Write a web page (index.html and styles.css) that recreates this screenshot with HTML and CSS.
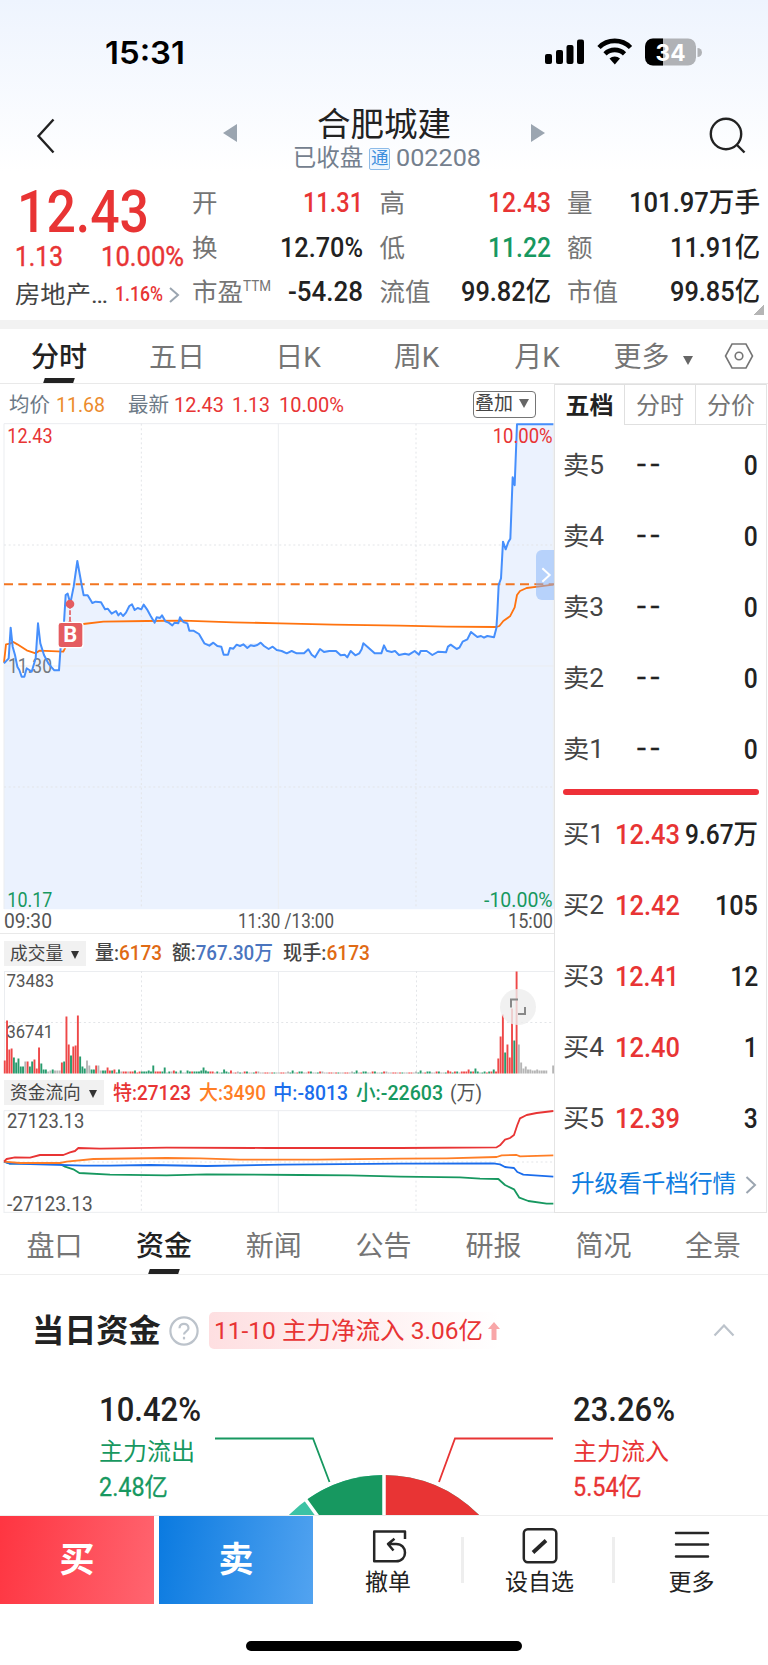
FILE: index.html
```html
<!DOCTYPE html>
<html lang="zh-CN">
<head>
<meta charset="utf-8">
<title>合肥城建 002208</title>
<link rel="stylesheet" href="styles.css">
</head>
<body>
<div class="screen">
  <div class="top">
    <div class="status">
      <span class="clock fit" data-w="80">15:31</span>
      <svg class="status-icons" viewBox="0 0 160 30" width="160" height="30">
        <rect x="0" y="16" width="7" height="10" rx="2"/><rect x="11" y="12" width="7" height="14" rx="2"/><rect x="21.500" y="7" width="7" height="19" rx="2"/><rect x="32" y="1.500" width="7" height="24.500" rx="2"/>
        <g fill="none" stroke="#000" stroke-width="4.600"><path d="M54 9.500a22 22 0 0 1 31.500 0"/><path d="M60 15.800a14 14 0 0 1 19.500 0"/></g>
        <path d="M64.500 20.500a8 8 0 0 1 10.500 0l-5.200 6z"/>
        <rect x="100" y="0.500" width="51" height="27" rx="8" fill="#b0b2b6"/><path d="M108 .5h10v27h-10a8 8 0 0 1-8-8v-11a8 8 0 0 1 8-8z"/>
        <path d="M152.500 10a4.500 4.500 0 0 1 0 9z" fill="#b0b2b6"/>
        <text x="110.500" y="22.500" textLength="30" lengthAdjust="spacingAndGlyphs" class="batt">34</text>
      </svg>
    </div>
    <div class="nav">
      <svg class="back" width="20" height="36" viewBox="0 0 20 36"><path d="M17.500 1.500L2.500 18l15 16.500"/></svg>
      <svg class="prev" width="14" height="18" viewBox="0 0 14 18"><path d="M14 0v18L0 9z"/></svg>
      <div class="title">
        <div class="name">合肥城建</div>
        <div class="sub"><span>已收盘</span><span class="tag">通</span><span class="fit" data-w="85">002208</span></div>
      </div>
      <svg class="next" width="14" height="18" viewBox="0 0 14 18"><path d="M0 0v18l14-9z"/></svg>
      <svg class="search" width="38" height="38" viewBox="0 0 38 38"><circle cx="17" cy="17" r="15.200"/><path d="M27.500 27.500l8 8"/></svg>
    </div>
    <div class="quote">
      <div class="price">
        <div class="last"><span class="fit" data-w="132">12.43</span></div>
        <div class="chg"><span class="fit" data-w="48">1.13</span><span class="fit" data-w="83">10.00%</span></div>
        <div class="sector"><span class="fit" data-w="93">房地产…</span><span class="pct fit" data-w="48">1.16%</span><svg width="12" height="18" viewBox="0 0 12 18"><path d="M2 2l8 7-8 7"/></svg></div>
      </div>
      <div class="stats">
        <div class="st"><label>开</label><b class="red fit" data-w="60">11.31</b></div>
        <div class="st"><label>高</label><b class="red fit" data-w="63">12.43</b></div>
        <div class="st"><label>量</label><b class="fit" data-w="131">101.97万手</b></div>
        <div class="st"><label>换</label><b class="fit" data-w="83">12.70%</b></div>
        <div class="st"><label>低</label><b class="green fit" data-w="63">11.22</b></div>
        <div class="st"><label>额</label><b class="fit" data-w="90">11.91亿</b></div>
        <div class="st"><label>市盈<sup class="fit" data-w="28">TTM</sup></label><b class="fit" data-w="75">-54.28</b></div>
        <div class="st"><label>流值</label><b class="fit" data-w="90">99.82亿</b></div>
        <div class="st"><label>市值</label><b class="fit" data-w="90">99.85亿</b></div>
      </div>
      <i class="corner"></i>
    </div>
  </div>
  <div class="band"></div>

  <div class="periods">
    <span class="on">分时</span><span>五日</span><span>日K</span><span>周K</span><span>月K</span><span class="more">更多<i class="tri"></i></span>
    <svg width="30" height="28" viewBox="0 0 30 28"><path d="M8 2h14l6.500 12L22 26H8L1.500 14z"/><circle cx="15" cy="14" r="3.800"/></svg>
  </div>

  <div class="market">
    <div class="charts">
      <div class="info">
        <span class="lab">均价</span><span class="avg fit" data-w="49">11.68</span>
        <span class="lab l2">最新</span><span class="red fit" data-w="50">12.43</span><span class="red v2 fit" data-w="38">1.13</span><span class="red v3 fit" data-w="65">10.00%</span>
        <span class="overlay">叠加<i class="tri"></i></span>
      </div>
      <svg class="main" width="554" height="487" viewBox="0 279 1662 1461">
        <path class="area" d="M12 1738V1000L26 985 32 893 38 950 45 975 52 1010 58 1020 65 1040 73 1040 80 1015 88 1020 95 1025 107 985 114 880 121 940 132 975 145 1000 155 1012 163 1021 177 1021 182 950 190 910 197 795 203 791 211 820 221 770 232 693 245 765 251 796 263 796 277 819 303 817 315 838 335 851 348 843 355 856 369 858 388 828 396 823 404 840 424 838 431 824 452 858 464 878 470 862 486 856 517 886 535 880 540 862 562 880 568 902 597 912 613 940 640 938 664 950 671 974 684 974 690 954 730 943 782 938 806 957 860 970 912 970 925 958 945 982 960 957 1008 963 1042 982 1052 963 1066 976 1085 958 1090 940 1124 970 1144 970 1152 946 1160 964 1197 975 1244 963 1297 975 1338 967 1352 944 1378 953 1402 928 1413 906 1432 921 1482 922 1489 895 1492 850 1496 765 1503 745 1509 635 1517 658 1531 626 1538 442 1544 466 1551 282H1660V1738z"/>
        <g class="grid"><path d="M12 281H1662M12 1008H1662M12 281V1737M835 281V1737M1660 281V1737"/><path class="dot" d="M12 645H1662M12 1371H1662M424 281V1737M1248 281V1737"/></g>
        <path class="dash" d="M12 763H1662"/>
        <path class="mean" d="M12 998L18 943 30 941 40 936 52 943 80 961 107 970 118 962 190 965 200 945 225 900 250 882 310 875 440 873 550 872 700 877 840 880 1000 884 1200 887 1340 890 1490 891 1498 888 1510 873 1530 859 1544 832 1551 795 1560 783 1580 774 1620 769 1660 764"/>
        <text x="24" y="1030" class="gray" textLength="132" lengthAdjust="spacingAndGlyphs">11.30</text>
        <path class="line" d="M12 1000L26 985 32 893 38 950 45 975 52 1010 58 1020 65 1040 73 1040 80 1015 88 1020 95 1025 107 985 114 880 121 940 132 975 145 1000 155 1012 163 1021 177 1021 182 950 190 910 197 795 203 791 211 820 221 770 232 693 245 765 251 796 263 796 277 819 287 815 303 817 315 838 323 836 335 851 348 843 355 856 362 849 369 858 378 848 388 828 396 823 404 840 413 834 424 838 431 824 441 838 452 858 464 878 470 862 480 864 486 856 496 874 506 878 517 886 524 878 535 880 540 862 550 876 562 880 568 902 580 902 597 912 613 940 628 947 640 938 652 948 664 950 671 974 684 974 690 954 700 956 710 944 720 948 730 943 742 954 752 946 762 948 772 945 782 938 792 948 806 957 818 950 830 960 845 963 860 970 875 963 890 970 912 970 925 958 935 974 945 982 960 957 972 966 988 963 1008 963 1022 976 1034 974 1042 982 1052 963 1066 976 1078 970 1085 958 1090 940 1102 950 1124 970 1144 970 1152 946 1160 962 1175 966 1185 963 1197 975 1215 971 1227 974 1244 963 1257 974 1262 963 1280 963 1297 975 1315 965 1338 967 1344 950 1352 944 1370 957 1378 953 1388 935 1402 928 1413 906 1432 921 1443 918 1452 923 1462 918 1482 922 1489 895 1492 850 1496 765 1503 745 1509 635 1517 658 1525 636 1531 626 1538 442 1544 466 1551 283H1660"/>
        <g class="mark"><path d="M210 822V880" class="stem"/><circle cx="210" cy="822" r="13"/><path d="M200 880l10-9 10 9z"/><rect x="174" y="877" width="75" height="76" rx="9"/><text x="190" y="935" textLength="42" lengthAdjust="spacingAndGlyphs">B</text></g>
        <g class="handle"><path d="M1662 660h-36a18 18 0 0 0-18 18v114a18 18 0 0 0 18 18h36z"/><path class="arr" d="M1627 715l22 20-22 20"/></g>
        <text x="22" y="339" class="r" textLength="136" lengthAdjust="spacingAndGlyphs">12.43</text>
        <text x="1478" y="339" class="r" textLength="180" lengthAdjust="spacingAndGlyphs">10.00%</text>
        <text x="22" y="1730" class="g" textLength="135" lengthAdjust="spacingAndGlyphs">10.17</text>
        <text x="1452" y="1730" class="g" textLength="206" lengthAdjust="spacingAndGlyphs">-10.00%</text>
      </svg>
      <div class="times"><span class="fit" data-w="48">09:30</span><span class="fit" data-w="96">11:30 /13:00</span><span class="fit" data-w="45">15:00</span></div>
      <div class="legend vol">
        <span class="pick">成交量<i class="tri"></i></span>
        <span class="fit" data-w="67">量:<em class="o">6173</em></span><span class="fit" data-w="101">额:<em class="b">767.30万</em></span><span class="fit" data-w="87">现手:<em class="o">6173</em></span>
      </div>
      <svg class="volume" width="554" height="103" viewBox="0 0 554 103">
        <g class="grid thin"><path d="M4 .5H554M4.500 0V102M278.500 0V102"/><path class="dot" d="M4 51.500H554M141.500 0V102M416.500 0V102"/></g>
        <g id="bars"></g>
        <text x="6.500" y="15.800" textLength="47.500" lengthAdjust="spacingAndGlyphs">73483</text>
        <text x="6.500" y="66.800" textLength="46.500" lengthAdjust="spacingAndGlyphs">36741</text>
        <circle cx="518" cy="36" r="18" class="knob"/><path class="expand" d="M511 36.500v-8h7M525 36v7h-7"/>
      </svg>
      <div class="legend flow">
        <span class="pick">资金流向<i class="tri"></i></span>
        <span class="red fit" data-w="78">特:27123</span><span class="o2 fit" data-w="67">大:3490</span><span class="bl fit" data-w="75">中:-8013</span><span class="green fit" data-w="87">小:-22603</span><span class="unit fit" data-w="32">(万)</span>
      </div>
      <svg class="flows" width="554" height="103" viewBox="0 690 1662 309">
        <g class="grid"><path d="M12 692H1662M12 692V999M835 692V999M12 997H1662"/><path class="dot" d="M12 846H1662M424 692V999M1248 692V999"/></g>
        <path stroke="#179860" d="M12 845L30 851 100 849 180 852 195 860 220 868 238 879 330 884 500 886 620 883 900 885 1050 886 1200 890 1380 892 1440 896 1495 897 1515 915 1542 928 1558 953 1585 963 1640 971 1660 971"/>
        <path stroke="#1b6dec" d="M12 845L30 851 90 852 250 857 330 857 450 855 620 858 850 854 1200 851 1480 850 1500 853 1515 861 1542 864 1552 876 1570 884 1660 890"/>
        <path stroke="#ff7e26" d="M12 845L60 849 180 849 200 845 280 837 500 834 600 835 720 839 950 839 1200 836 1340 835 1490 831 1505 826 1550 825 1560 829 1660 826"/>
        <path stroke="#e83434" d="M12 845L20 837 45 832 90 833 120 825 190 825 210 817 225 813 235 804 300 806 500 803 800 804 1200 804 1490 802 1500 796 1515 779 1530 774 1542 765 1552 735 1560 715 1580 705 1610 699 1660 693"/>
        <text x="21" y="744" textLength="232" lengthAdjust="spacingAndGlyphs">27123.13</text>
        <text x="21" y="992" textLength="257" lengthAdjust="spacingAndGlyphs">-27123.13</text>
      </svg>
    </div>

    <div class="book">
      <div class="btabs"><span class="on">五档</span><span>分时</span><span>分价</span></div>
      <div class="row"><span class="k fit" data-w="41">卖5</span><span class="dd fit" data-w="27">--</span><span class="q fit" data-w="14">0</span></div>
      <div class="row"><span class="k fit" data-w="41">卖4</span><span class="dd fit" data-w="27">--</span><span class="q fit" data-w="14">0</span></div>
      <div class="row"><span class="k fit" data-w="41">卖3</span><span class="dd fit" data-w="27">--</span><span class="q fit" data-w="14">0</span></div>
      <div class="row"><span class="k fit" data-w="41">卖2</span><span class="dd fit" data-w="27">--</span><span class="q fit" data-w="14">0</span></div>
      <div class="row"><span class="k fit" data-w="41">卖1</span><span class="dd fit" data-w="27">--</span><span class="q fit" data-w="14">0</span></div>
      <div class="split"></div>
      <div class="row"><span class="k fit" data-w="41">买1</span><span class="p fit" data-w="65">12.43</span><span class="q fit" data-w="73">9.67万</span></div>
      <div class="row"><span class="k fit" data-w="41">买2</span><span class="p fit" data-w="65">12.42</span><span class="q fit" data-w="43">105</span></div>
      <div class="row"><span class="k fit" data-w="41">买3</span><span class="p fit" data-w="64">12.41</span><span class="q fit" data-w="28">12</span></div>
      <div class="row"><span class="k fit" data-w="41">买4</span><span class="p fit" data-w="65">12.40</span><span class="q fit" data-w="14">1</span></div>
      <div class="row"><span class="k fit" data-w="41">买5</span><span class="p fit" data-w="65">12.39</span><span class="q fit" data-w="14">3</span></div>
      <div class="upgrade"><span>升级看千档行情</span><svg width="12" height="20" viewBox="0 0 12 20"><path d="M1.500 2l8.500 8-8.500 8"/></svg></div>
    </div>
  </div>

  <div class="sections"><span>盘口</span><span class="on">资金</span><span>新闻</span><span>公告</span><span>研报</span><span>简况</span><span>全景</span></div>

  <div class="fund-head">
    <h2>当日资金</h2>
    <svg width="30" height="30" viewBox="0 0 30 30"><circle cx="15" cy="15" r="13.600"/><path d="M10.500 12.300c0-6 9-6 9 0 0 3.200-4.500 3-4.500 6.200"/><path d="M15 20.800v2.600"/></svg>
    <span class="badge"><span class="fit" data-w="269">11-10 主力净流入 3.06亿</span><svg width="12" height="18" viewBox="0 0 12 18"><path d="M6 0l6 7H8.500v11h-5V7H0z"/></svg></span>
    <svg class="up" width="22" height="13" viewBox="0 0 22 13"><path d="M1.500 11.500L11 1.500l9.500 10"/></svg>
  </div>

  <div class="fund-body">
    <div class="part green"><b class="fit" data-w="102">10.42%</b><span>主力流出</span><em class="fit" data-w="69">2.48亿</em></div>
    <svg class="pie" width="338" height="103" viewBox="0 0 338 103">
      <path class="ln" stroke="#179860" d="M0 26.500h98L114.500 70"/>
      <path class="ln" stroke="#e83434" d="M338 26.500h-98L224 70"/>
      <circle cx="169" cy="196" r="133" fill="#3cc2a4"/>
      <path d="M169 196L91.200 88.100A133 133 0 0 1 169 63z" fill="#179860"/>
      <path d="M169 196V63A133 133 0 0 1 302 196z" fill="#e83434"/>
      <path d="M169 196V60M169 196L89.500 86" stroke="#fff" stroke-width="3.500"/>
    </svg>
    <div class="part red"><b class="fit" data-w="102">23.26%</b><span>主力流入</span><em class="fit" data-w="69">5.54亿</em></div>
  </div>

  <div class="bar">
    <div class="buy">买</div><div class="sell">卖</div>
    <div class="act"><svg width="36" height="36" viewBox="0 0 36 36"><path d="M33 11V3.500H2.200v29.800H24c12 0 12-17.300 0-17.300h-8M22.500 10.800L16 16l5.500 6.500"/></svg><span>撤单</span></div>
    <i></i>
    <div class="act"><svg width="36" height="36" viewBox="0 0 36 36"><rect x="1.800" y="1.300" width="32.500" height="33" rx="4"/><path stroke-width="3.800" d="M11 24.500L24 12.500"/></svg><span>设自选</span></div>
    <i></i>
    <div class="act last-act"><svg width="36" height="36" viewBox="0 0 36 36"><path d="M2 5h32M2 16.500h32M2 28.500h32" stroke-linecap="round"/></svg><span>更多</span></div>
  </div>
  <div class="home"><i></i></div>
</div>
<script src="chart.js"></script>
</body>
</html>
```
FILE: styles.css
```css
* { box-sizing: border-box; }
body { margin: 0; background: #fff; }
.screen { width: 768px; height: 1665px; overflow: hidden; font-family: Roboto, "Noto Sans CJK SC", sans-serif; color: #222; line-height: 1; }
svg { display: block; flex: none; fill: none; }
i, em { font-style: normal; }
.fit { display: inline-block; white-space: nowrap; flex: none; transform-origin: 0 50%; }
.red { color: #e83434; }
.green { color: #179860; }
.tri { display: inline-block; width: 0; height: 0; border: 5.5px solid transparent; border-bottom: 0; border-top: 9px solid #666; }

.top { height: 320px; background: linear-gradient(#eef4fe, #fff 172px); }
.status { height: 84px; display: flex; padding: 38px 63px 0 105px; justify-content: space-between; }
.clock { font: 600 31px/30px Inter, sans-serif; color: #000; }
.status-icons { fill: #000; }
.batt { font: 700 23px Inter, sans-serif; fill: #fff; }
.nav { height: 96px; display: flex; padding: 0 20px 0 36px; }
.back { margin-top: 34px; stroke: #222; stroke-width: 2.4; }
.prev, .next { fill: #9ba5b0; margin-top: 39.5px; }
.prev { margin-left: 167px; }
.title { width: 294px; text-align: center; padding-top: 23px; }
.name { font-size: 33.5px; line-height: 36px; }
.sub { display: flex; justify-content: center; align-items: center; font-size: 23.5px; height: 28px; color: #74808e; margin-top: 2px; padding-left: 6px; }
.tag { width: 21px; height: 22px; border: 1.5px solid #8dbbe8; border-radius: 2px; font-size: 17.5px; line-height: 18px; color: #3d8fdd; margin: 0 6px; text-align: center; background: #eef6fe; }
.search { margin: 33px 0 0 164px; stroke: #222; stroke-width: 2.4; }
.quote { display: flex; padding: 1px 7px 0 15px; position: relative; }
.price { width: 177px; color: #e83434; }
.last { height: 60px; font-size: 59px; font-weight: 500; line-height: 62px; padding-left: 2px; }
.chg { height: 30px; display: flex; align-items: center; width: 169px; justify-content: space-between; font-size: 27px; padding-top: 2px; }
.chg .fit { -webkit-text-stroke: .4px; }
.sector { height: 44px; display: flex; align-items: center; font-size: 24px; color: #444; padding-top: 3px; }
.sector .pct { font-size: 19.5px; font-weight: 500; color: #e83434; margin-left: 7px; }
.sector svg { stroke: #9ba5b0; stroke-width: 2; margin-left: 5px; }
.stats { display: grid; grid-template-columns: 171px 171px 193px; column-gap: 16.5px; grid-auto-rows: 44.5px; }
.st { display: flex; justify-content: space-between; align-items: center; font-size: 27px; white-space: nowrap; padding-top: 1px; }
.st label { color: #757575; font-size: 25.5px; }
.st sup { font-size: 15px; vertical-align: 10px; line-height: 0; }
.st b { font-weight: 500; }
.corner { position: absolute; right: 4px; top: 124px; width: 10px; height: 11px; background: linear-gradient(135deg, transparent 50%, #b5b5b5 50%); }
.band { height: 9px; background: #f2f2f2; }

.periods { height: 55px; border-bottom: 1px solid #e9e9e9; display: grid; grid-template-columns: 118px 118px 124px 113px 128px 112px 55px; align-items: center; font-size: 28px; color: #757575; text-align: center; }
.periods span { height: 54px; line-height: 58px; }
.periods svg { stroke: #757575; stroke-width: 1.6; margin-left: 11px; }
.periods .more { padding-right: 8px; }
.periods .more .tri { margin-left: 13px; vertical-align: 2px; }
.on { color: #222; font-weight: 500; position: relative; }
.periods .on::after, .sections .on::after { content: ""; position: absolute; left: 50%; margin-left: -15px; bottom: 0; width: 30px; height: 5px; background: #222; transform: skewX(-18deg); }

.market { display: flex; height: 829px; }
.charts { width: 554px; }
.info { height: 39px; display: flex; align-items: center; padding: 4px 18px 0 9px; font-size: 21px; color: #6d7a87; }
.info .avg { color: #ec8b2c; margin-left: 6px; }
.info .l2 { margin-left: 23px; }
.info .l2 + .red { margin-left: 5px; }
.info .lab { font-size: 20.5px; }
.info .v2 { margin-left: 8px; }
.info .v3 { margin-left: 9px; }
.overlay { margin: -2px 0 0 auto; border: 1.5px solid #757575; border-radius: 4px; width: 63px; height: 27px; line-height: 24px; font-size: 19px; color: #444; padding-left: 1px; white-space: nowrap; }
.overlay .tri { margin-left: 6px; vertical-align: 2px; }
.grid path { stroke: #ebedf0; stroke-width: 3; }
.grid .dot { stroke: #e3e5e8; stroke-dasharray: 6 8; }
.thin path { stroke-width: 1; }
.thin .dot { stroke-dasharray: 2 2.7; }
.area { fill: #ebf2fe; }
.line { stroke: #468ffc; stroke-width: 6; stroke-linejoin: round; }
.mean { stroke: #ff730f; stroke-width: 5.5; stroke-linejoin: round; }
.dash { stroke: #f27520; stroke-width: 6; stroke-dasharray: 27 16; }
.main text { font-size: 60px; }
.main .r { fill: #e83434; }
.main .g { fill: #179860; }
.main .gray { fill: #73797f; }
.mark { fill: #e45c60; }
.main .mark text { fill: #fff; font-size: 66px; font-weight: 700; }
.mark rect { stroke: #fff; stroke-width: 4; }
.mark .stem { stroke: #e45c60; stroke-width: 5; stroke-dasharray: 14 5; }
.handle { fill: rgba(132, 178, 247, .5); }
.handle .arr { stroke: #fff; stroke-width: 6; fill: none; }
.times { height: 24px; display: flex; justify-content: space-between; align-items: center; padding: 0 1px 0 4px; font-size: 19.5px; color: #555; border-bottom: 1px solid #e9e9e9; }
.times span:nth-child(2) { margin-left: 98px; }
.times span:nth-child(3) { margin-left: 86px; }
.legend { display: flex; align-items: center; padding-left: 4px; font-size: 20px; font-weight: 500; }
.legend .fit { margin-left: 10px; }
.legend .pick + .fit { margin-left: 9px; }
.flow .fit { margin-left: 7.5px; }
.vol { height: 37px; color: #444; padding-top: 1px; }
.flow { height: 36px; padding-top: 1px; }
.pick { height: 25px; background: #f1f1f1; font-size: 17.7px; font-weight: 400; color: #444; line-height: 26px; padding-left: 6px; width: 82px; white-space: nowrap; }
.flow .pick { width: 100px; }
.pick .tri { margin-left: 8px; border-width: 8px 4px 0; border-top-color: #333; vertical-align: 1px; }
.o { color: #e06a14; }
.o2 { color: #ff7e26; }
.b { color: #4a74be; }
.bl { color: #1b6dec; }
.legend .unit { color: #555; font-weight: 400; }
.volume text { font-size: 19px; fill: #555; }
.knob { fill: #eee; fill-opacity: .8; }
.expand { stroke: #888; stroke-width: 2; }
.flows > path { stroke-width: 5.5; stroke-linejoin: round; }
.flows text { font-size: 59px; fill: #555; }

.book { width: 213px; border: 1.5px solid #e4e4e4; border-top: 0; }
.btabs { display: flex; height: 41px; font-size: 24px; color: #757575; text-align: center; line-height: 43px; }
.btabs span { width: 71px; border: 1.5px solid #e0e0e0; border-right: 0; }
.btabs .on { width: 69px; border-left: 0; border-bottom: 0; font-weight: 700; }
.row { height: 71px; display: flex; align-items: center; padding: 0 8px; position: relative; }
.btabs + .row { margin-top: 5px; }
.k { font-size: 25.5px; color: #444; }
.dd { font-size: 28px; font-weight: 400; -webkit-text-stroke: .4px; letter-spacing: 4px; margin-left: 33px; margin-top: -3px; }
.p { font-size: 28px; font-weight: 500; color: #e83434; margin-left: 11px; }
.q { font-size: 27.5px; font-weight: 500; position: absolute; right: 8px; transform-origin: 100% 50%; }
.split { height: 6px; margin: 4px 7px 4px 8px; border-radius: 3px; background: #ee3038; }
.upgrade { display: flex; align-items: center; gap: 9px; padding-left: 16px; height: 62px; font-size: 23.6px; color: #0f7ce0; white-space: nowrap; }
.upgrade svg { stroke: #9ba5b0; stroke-width: 2; }

.sections { height: 62px; border-bottom: 1px solid #eee; display: grid; grid-template-columns: 109px 110px 109.5px 110px 110px 110px 109px; font-size: 28px; color: #757575; text-align: center; line-height: 67px; }
.sections span { height: 61px; }
.fund-head { display: flex; align-items: center; padding: 0 33px 0 32px; height: 111px; }
.fund-head h2 { margin: 1px 8px 0 0; font-size: 32.2px; font-weight: 700; }
.fund-head > svg { stroke: #bcc3cb; stroke-width: 2.2; }
.badge { height: 37px; display: flex; align-items: center; margin-left: 10px; padding-left: 5px; width: 291px; border-radius: 5px; font-size: 24px; color: #e83434; background: linear-gradient(90deg, #fedfe1, #fff); }
.badge svg { fill: #f8a6a8; margin-left: 5px; }
.fund-head .up { margin-left: auto; }
.fund-body { display: flex; height: 129px; padding: 0 0 0 99px; }
.part { width: 116px; display: flex; flex-direction: column; align-items: flex-start; padding-top: 7px; }
.part b { font-size: 33.5px; font-weight: 500; color: #222; height: 34px; }
.part span { font-size: 24px; margin-top: 13px; height: 24px; }
.part em { font-size: 25px; margin-top: 11px; -webkit-text-stroke: .3px; }
.part.red { margin-left: 20px; }
.pie { margin-top: 26px; }
.ln { stroke-width: 1.8; }
.bar { height: 88px; display: flex; align-items: center; border-top: 1px solid #eee; background: #fff; }
.buy, .sell { width: 154px; height: 88px; color: #fff; font-size: 35px; font-weight: 700; text-align: center; line-height: 90px; }
.buy { background: linear-gradient(100deg, #fe3541, #ff6570); }
.sell { margin-left: 5px; background: linear-gradient(100deg, #0a7ae0, #52a3f0); }
.act { width: 148px; height: 88px; display: flex; flex-direction: column; align-items: center; padding: 12px 0 0 2px; font-size: 23px; }
.act:not(.last-act) + i + .act { padding-left: 3px; }
.act:nth-child(3) svg { margin-left: 3px; }
.last-act { width: 150px; }
.act svg { stroke: #262626; stroke-width: 2.5; stroke-linejoin: round; }
.act span { margin-top: 7.5px; }
.bar > i { width: 3px; height: 46px; background: #eee; }
.home { height: 62px; padding-top: 38px; }
.home i { display: block; width: 276px; height: 10px; border-radius: 5px; background: #000; margin: 0 auto; }
```
FILE: chart.js
```js
// Narrow or widen a figure to its column width, keeping its place in the row.
document.querySelectorAll('.fit').forEach(function (el) {
  var natural = el.getBoundingClientRect().width;
  var w = Number(el.dataset.w);
  el.style.transform = 'scaleX(' + w / natural + ')';
  if (getComputedStyle(el).position !== 'absolute') el.style.marginRight = (w - natural) + 'px';
});

// One bar per minute: height and r(ise), g(fall) or n(eutral).
var early = '13r 53r 24r 25r 16g 11g 15g 7g 7g 12n 12r 7g 12g 14r 5r 26r 10g 4g 4g 2n 3n 4g 3n 3n 3n 11r 12g 57r 29r 18g 27r 28r 58r 17g 7g 5g 13n 8n 4g 4g 8r 8n 3n 3g 3g 6r 3r 3g 4r 1g 4g 2n 2r 2r 2n 2r 2r 3g 1r 2r 2g 2g 2g 3g 2g 8g 2r 2r 2r 2g 6g 1n 2g 2n 3r 2g 1n 3g 1n 1n 3g 2g 2r 2g 2g 2g 3g 6g 3g 2g 2r 2r 1n 2g 1n 1g 4g 2g 1g 3r 1n 1r 2n 1g'.split(' ');
var late = '15r 37r 59r 21g 29r 16r 65r 33g 102r 29n 11n 5n 7n 4n 4n 3n 3n 4n 3n 3n 3n 3n'.split(' ');
var small = '1n 2g 1r 1n 2r 1g 1n 1r 2g 1n 1g 2r 1n 1r 1g 2n 5g 1n 1r 2g 1r'.split(' ');
var tail = '3r 2r 1g 2r 2g 1n 2r 2r 2r 4r 2g 2r 5g 2g 1n 1g 2g 1r 2g 2r 4g 2r'.split(' ');
var bars = early.slice();
for (var i = 0; bars.length < 194; i++) {
  var b = small[(i * 11 + (i >> 2)) % small.length];
  bars.push(b === '5g' && i !== 17 ? '3g' : b);
}
bars = bars.concat(tail, late);
while (bars.length < 240) bars.push('0n');
bars.push('8n');
var fills = { r: '#ee4848', g: '#279b6d', n: '#b5b5b5' };
document.getElementById('bars').innerHTML = bars.map(function (b, i) {
  var h = parseInt(b, 10);
  return '<rect x="' + (3.8 + i * 2.285).toFixed(2) + '" y="' + (102.5 - h) + '" width="1.9" height="' + h + '" fill="' + fills[b.slice(-1)] + '"/>';
}).join('');
```
